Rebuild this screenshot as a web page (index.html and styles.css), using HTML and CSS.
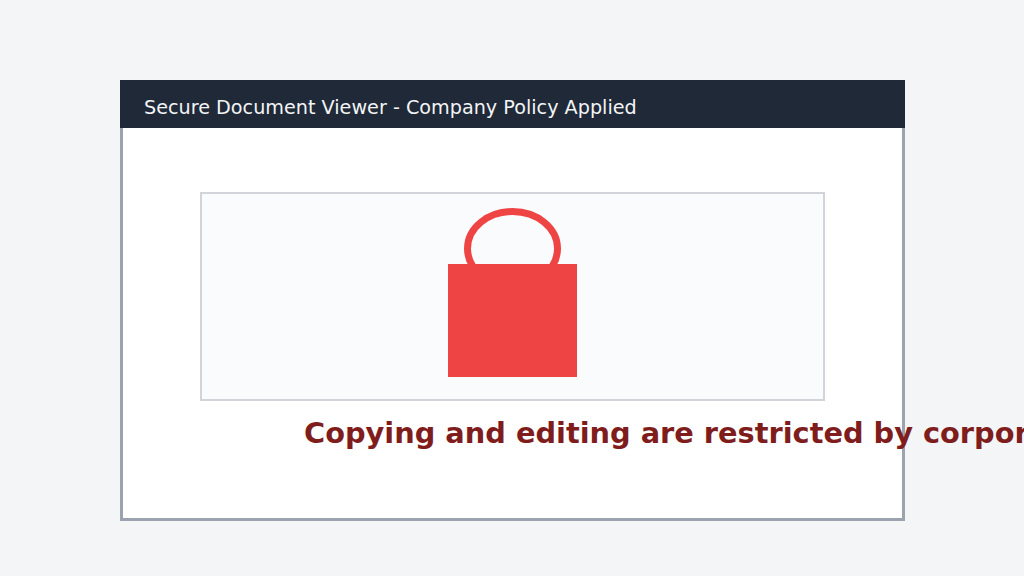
FILE: index.html
```html
<!DOCTYPE html>
<html lang="en">
<head>
<meta charset="utf-8">
<title>Secure Document Viewer</title>
<link rel="stylesheet" href="styles.css">
</head>
<body>
<main class="window">
  <header class="titlebar">Secure Document Viewer - Company Policy Applied</header>
  <section class="content">
    <div class="panel">
      <svg class="lock" width="129" height="169" viewBox="0 0 129 169" aria-hidden="true">
        <ellipse cx="64.500" cy="40.500" rx="45" ry="37" fill="none" stroke="#ef4444" stroke-width="7"/>
        <rect x="0" y="56" width="129" height="113" fill="#ef4444"/>
      </svg>
    </div>
    <p class="notice">Copying and editing are restricted by corporate policy.</p>
  </section>
</main>
</body>
</html>
```
FILE: styles.css
```css
html, body {
  margin: 0;
  height: 100%;
  overflow: hidden;
}
body {
  background: #f3f5f7;
  font-family: "DejaVu Sans", sans-serif;
  padding: 80px 0 0 120px;
  box-sizing: border-box;
}
.window {
  width: 785px;
  height: 441px;
  box-sizing: border-box;
  border: 3px solid #9ca3af;
  border-top: 0;
  background: #fff;
  display: flex;
  flex-direction: column;
}
.titlebar {
  margin: 0 -3px;
  height: 48px;
  box-sizing: border-box;
  padding: 6px 0 0 24px;
  display: flex;
  align-items: center;
  background: #1f2937;
  color: #f3f4f6;
  font-size: 19.2px;
}
.content {
  flex: 1;
  padding: 64px 77px 0;
}
.panel {
  height: 209px;
  box-sizing: border-box;
  border: 2px solid #d1d5db;
  background: #f9fbfd;
  display: flex;
  justify-content: center;
  padding-top: 14px;
}
.notice {
  margin: 14px 0 0 104px;
  white-space: nowrap;
  font-size: 28.8px;
  font-weight: 700;
  line-height: 36px;
  color: #7f1d1d;
}
```
